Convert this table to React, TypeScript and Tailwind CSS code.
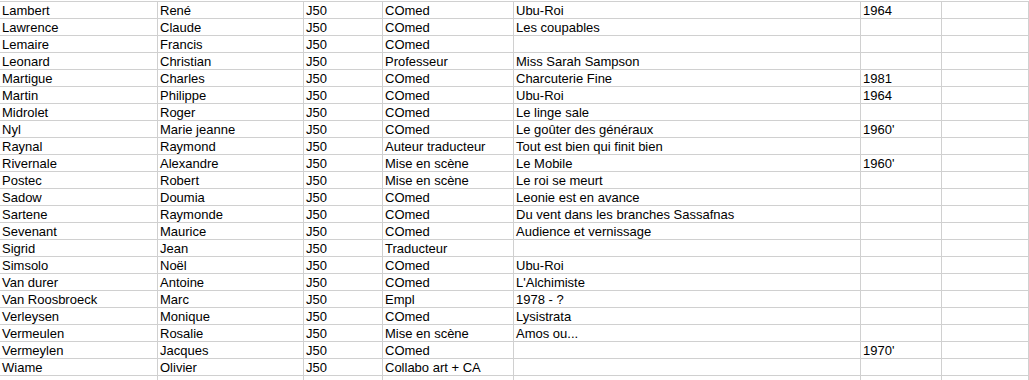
const rows: string[][] = [
  ["Lambert", "René", "J50", "COmed", "Ubu-Roi", "1964"],
  ["Lawrence", "Claude", "J50", "COmed", "Les coupables", ""],
  ["Lemaire", "Francis", "J50", "COmed", "", ""],
  ["Leonard", "Christian", "J50", "Professeur", "Miss Sarah Sampson", ""],
  ["Martigue", "Charles", "J50", "COmed", "Charcuterie Fine", "1981"],
  ["Martin", "Philippe", "J50", "COmed", "Ubu-Roi", "1964"],
  ["Midrolet", "Roger", "J50", "COmed", "Le linge sale", ""],
  ["Nyl", "Marie jeanne", "J50", "COmed", "Le goûter des généraux", "1960'"],
  ["Raynal", "Raymond", "J50", "Auteur traducteur", "Tout est bien qui finit bien", ""],
  ["Rivernale", "Alexandre", "J50", "Mise en scène", "Le Mobile", "1960'"],
  ["Postec", "Robert", "J50", "Mise en scène", "Le roi se meurt", ""],
  ["Sadow", "Doumia", "J50", "COmed", "Leonie est en avance", ""],
  ["Sartene", "Raymonde", "J50", "COmed", "Du vent dans les branches Sassafnas", ""],
  ["Sevenant", "Maurice", "J50", "COmed", "Audience et vernissage", ""],
  ["Sigrid", "Jean", "J50", "Traducteur", "", ""],
  ["Simsolo", "Noël", "J50", "COmed", "Ubu-Roi", ""],
  ["Van durer", "Antoine", "J50", "COmed", "L'Alchimiste", ""],
  ["Van Roosbroeck", "Marc", "J50", "Empl", "1978 - ?", ""],
  ["Verleysen", "Monique", "J50", "COmed", "Lysistrata", ""],
  ["Vermeulen", "Rosalie", "J50", "Mise en scène", "Amos ou...", ""],
  ["Vermeylen", "Jacques", "J50", "COmed", "", "1970'"],
  ["Wiame", "Olivier", "J50", "Collabo art + CA", "", ""],
  ["Tillieux", "Sandrine", "J50", "Acteur", "Sa la vie des acteurs", "1990"],
]

// largeurs des colonnes, bordure droite comprise
const cols = ["w-[158px]", "w-[146px]", "w-[79px]", "w-[131px]", "w-[347px]", "w-[81px]", "w-[87px]"]

export default function App() {
  return (
    <div className="h-[380px] w-[1029px] overflow-hidden bg-white pt-px font-['Liberation_Sans',Arial,sans-serif] text-[13px] text-black">
      {rows.map((row, i) => (
        <div key={i} className="flex h-[17px] border-t border-[#d0d0d0]">
          {cols.map((w, j) => (
            <div
              key={j}
              className={`${w} shrink-0 overflow-hidden whitespace-nowrap border-r border-[#d0d0d0] pl-[2px] leading-[17px]`}
            >
              {row[j] ?? ""}
            </div>
          ))}
        </div>
      ))}
    </div>
  )
}
